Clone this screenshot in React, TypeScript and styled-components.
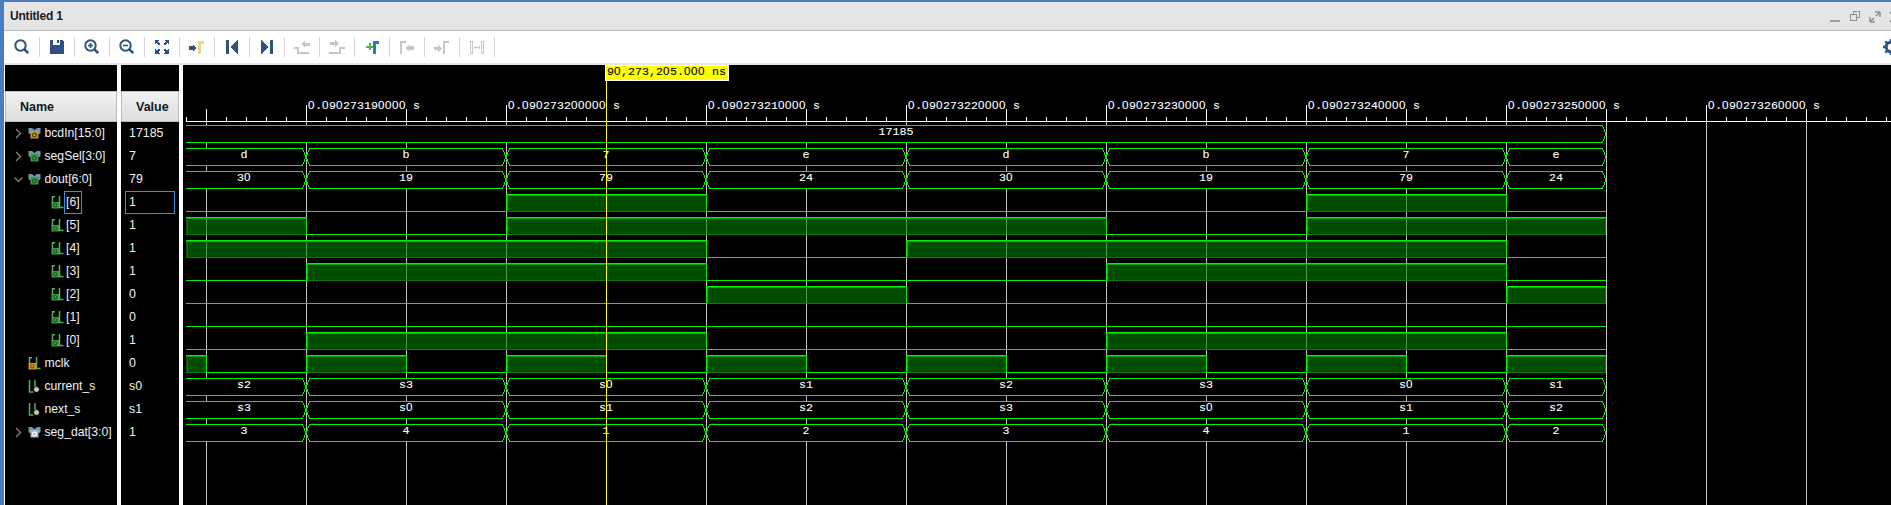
import React from "react";
import styled, { createGlobalStyle } from "styled-components";

const Global = createGlobalStyle`
  html, body { margin: 0; padding: 0; background: #fff; overflow: hidden; }
  #root { width: 1891px; height: 505px; }
`;

const Frame = styled.div`
  width: 1891px;
  height: 505px;
  box-sizing: border-box;
  border-top: 2px solid #4a7cc4;
  border-left: 4px solid #4a7cc4;
  display: flex;
  flex-direction: column;
  overflow: hidden;
  background: #fff;
  font-family: "Liberation Sans", Arial, sans-serif;
`;
const TitleBar = styled.div`
  height: 28px;
  flex: none;
  background: #e5e5e5;
  border-bottom: 1px solid #b9b9b9;
  display: flex;
  align-items: center;
  padding: 0 0 0 6px;
`;
const Title = styled.span`
  font-size: 12px;
  font-weight: 700;
  color: #1a1a1a;
  letter-spacing: -0.2px;
`;
const WinButtons = styled.div`
  margin-left: auto;
  display: flex;
  gap: 8px;
  margin-right: -10px;
  padding-top: 2px;
`;
const Toolbar = styled.div`
  height: 32px;
  flex: none;
  background: #fff;
  border-bottom: 2px solid #e6e6e6;
  display: flex;
  align-items: center;
  padding-left: 1px;
  overflow: hidden;
`;
const ToolBtn = styled.div`
  width: 34px;
  height: 20px;
  flex: none;
  display: flex;
  align-items: center;
  justify-content: center;
  border-right: 1px solid #d6d6d6;
`;
const Gear = styled.div`
  margin-left: auto;
  flex: none;
  width: 8px;
  height: 16px;
  overflow: hidden;
`;
const Main = styled.div`
  flex: 1;
  min-height: 0;
  display: grid;
  grid-template-columns: 112px 58px 1708px;
  column-gap: 4px;
  padding-left: 1px;
  background: #fff;
`;
const Column = styled.div`
  background: #000;
  display: flex;
  flex-direction: column;
  padding-top: 26px;
`;
const HeaderCell = styled.div`
  height: 31px;
  flex: none;
  box-sizing: border-box;
  background: linear-gradient(#f2f2f2, #dedede);
  border: 1px solid #bdbdbd;
  display: flex;
  align-items: center;
  padding-left: 14px;
  font-size: 12.5px;
  font-weight: 700;
  color: #101828;
`;
const Row = styled.div<{ $indent: number }>`
  height: 23px;
  flex: none;
  display: flex;
  align-items: center;
  padding-left: ${(p) => p.$indent}px;
  font-size: 12.2px;
  color: #eef2f8;
  white-space: nowrap;
`;
const Chevron = styled.svg`
  width: 9px;
  height: 11px;
  flex: none;
  margin-right: 5px;
`;
const NameIcon = styled.svg`
  width: 13px;
  height: 13px;
  flex: none;
`;
const NameLabel = styled.span<{ $selected?: boolean; $child?: boolean }>`
  height: 23px;
  line-height: 21px;
  box-sizing: border-box;
  padding: 0 1px;
  margin-left: ${(p) => (p.$child ? "0" : "1.5px")};
  border: 1px solid ${(p) => (p.$selected ? "#3d8fd1" : "transparent")};
`;
const ValueCell = styled.div<{ $selected?: boolean }>`
  height: 23px;
  flex: none;
  box-sizing: border-box;
  margin: 0 4px;
  padding-left: 3px;
  line-height: 21px;
  font-size: 12.4px;
  color: #eef2f8;
  border: 1px solid ${(p) => (p.$selected ? "#3d8fd1" : "transparent")};
`;
const WavePane = styled.div`
  background: #000;
  overflow: hidden;
`;
const WaveSvg = styled.svg`
  display: block;
  shape-rendering: crispEdges;
`;
const MonoText = styled.text<{ $fill: string }>`
  font-family: "Liberation Mono", "Courier New", monospace;
  font-size: 11.67px;
  fill: ${(p) => p.$fill};
  stroke: ${(p) => p.$fill};
  stroke-width: 0.1px;
`;
const PlainZero = styled.tspan`
  font-family: "Liberation Sans", Arial, sans-serif;
`;

const CELL = 7;
const MonoLabel = ({ x, y, fill, children }: { x: number; y: number; fill: string; children: string }) => (
  <MonoText $fill={fill} y={y}>
    {children.split("").map((c, i) =>
      c === "0" ? (
        <PlainZero key={i} x={x + i * CELL}>{c}</PlainZero>
      ) : (
        <tspan key={i} x={x + i * CELL}>{c}</tspan>
      )
    )}
  </MonoText>
);
const CenterLabel = ({ cx, y, children }: { cx: number; y: number; children: string }) => (
  <MonoLabel x={cx - (children.length * CELL) / 2} y={y} fill="#fff">{children}</MonoLabel>
);

const NAVY = "#2f5185";
const OFF = "#c6c6c6";

const Search = ({ mark }: { mark?: "plus" | "minus" }) => (
  <svg width="18" height="18" viewBox="0 0 18 18">
    <circle cx="7.5" cy="7.5" r="5.2" fill="none" stroke={NAVY} strokeWidth="2" />
    <path d="M11.2 11.2 L15.2 15.2" stroke={NAVY} strokeWidth="2.6" />
    {mark && <path d="M5 7.5h5" stroke={NAVY} strokeWidth="1.6" />}
    {mark === "plus" && <path d="M7.5 5v5" stroke={NAVY} strokeWidth="1.6" />}
  </svg>
);
const I = ({ children }: { children: React.ReactNode }) => (
  <svg width="18" height="18" viewBox="0 0 18 18" shapeRendering="crispEdges">{children}</svg>
);
const tools: React.ReactNode[] = [
  <Search key="s" />,
  <I key="save"><path d="M2 2h3v5h7V2h2l2 2v12H2z" fill={NAVY} /><rect x="9" y="2" width="2" height="3" fill={NAVY} /></I>,
  <Search key="in" mark="plus" />,
  <Search key="out" mark="minus" />,
  <I key="fit"><path d="M2 2h5l-1.6 1.6L7.5 6 6 7.5 3.6 5.4 2 7z M16 2v5l-1.6-1.6L12 7.5 10.5 6l2.1-2.4L11 2z M2 16v-5l1.6 1.6L6 10.5 7.5 12l-2.1 2.4L7 16z M16 16h-5l1.6-1.6L10.5 12 12 10.5l2.4 2.1L16 11z" fill={NAVY} /></I>,
  <I key="goto"><rect x="1" y="8" width="4" height="4" fill={NAVY} /><path d="M5 6.5l3 3.5-3 3.5z" fill={NAVY} /><path d="M10 16V3h6v2.5h-3.5V16z" fill="#e8d68a" /></I>,
  <I key="first"><rect x="3" y="2" width="3" height="14" fill={NAVY} /><path d="M15 2v14L7 9z" fill={NAVY} /></I>,
  <I key="last"><path d="M3 2v14l8-7z" fill={NAVY} /><rect x="12" y="2" width="3" height="14" fill={NAVY} /></I>,
  <I key="prev"><path d="M1 9h5v5h10v2H4v-5H1z" fill={OFF} /><path d="M8 6l4-3.5V5h5v3h-5v2z" fill={OFF} /></I>,
  <I key="next"><path d="M1 14h10V9h6v2h-4v5H1z" fill={OFF} /><path d="M2 4h5V2l4 3.5L7 9V7H2z" fill={OFF} /></I>,
  <I key="add"><path d="M3 7.5h2.5V5h2v2.5H10v2H7.5V12h-2V9.5H3z" fill="#46b848" /><path d="M10 16V3h6v2.5h-3.500V16z" fill="#2f7ab5" /></I>,
  <I key="pm"><path d="M2 16V3h6v2h-4v11z" fill={OFF} /><path d="M7 10l4-3.500V8h5v4h-5v1.500z" fill={OFF} /></I>,
  <I key="nm"><path d="M1 9h4V7l4 3.500L5 14v-2H1z" fill={OFF} /><path d="M10 16V3h6v2h-4v11z" fill={OFF} /></I>,
  <I key="sw"><path d="M2.500 3.500h2v12h-2zM13.500 3.500h2v12h-2z" fill="none" stroke={OFF} /><path d="M6 9.500h6M7 8v3M11 8v3" stroke={OFF} /></I>,
];

type Kind = "bus" | "bit";
type Tint = "orange" | "green" | "grey";
const tintFill: Record<Tint, string> = { orange: "#e98a1c", green: "#3f9a45", grey: "#a9b3ba" };

const BusGlyph = ({ tint }: { tint: Tint }) => (
  <NameIcon viewBox="0 0 13 13">
    <path d="M0.500 1h3.500l2.500 2L9 1h3.500v5l-1 1h-10l-1-1z" fill="#6f98ad" />
    <rect x="2.500" y="4" width="8" height="7.500" fill={tintFill[tint]} />
    <circle cx="6.500" cy="8" r="1.900" fill="none" stroke={tint === "grey" ? "#fff" : "#1f5a25"} strokeWidth="1.200" />
  </NameIcon>
);
const BitGlyph = ({ tint }: { tint: Tint }) =>
  tint === "grey" ? (
    <NameIcon viewBox="0 0 13 13">
      <path d="M1.500 0v12h4M7 0v7h2" fill="none" stroke="#55b05a" strokeWidth="1.500" />
      <circle cx="8.500" cy="9.500" r="2.800" fill="#c9c9c9" stroke="#000" strokeWidth="0.600" />
    </NameIcon>
  ) : (
    <NameIcon viewBox="0 0 13 13">
      <path d="M1.500 0v7M1.500 0.700h2.500M8.500 0v11.500h4" fill="none" stroke="#55b05a" strokeWidth="1.500" />
      <rect x="0.500" y="6" width="7.500" height="6.500" fill={tintFill[tint]} />
      <circle cx="4.300" cy="9.200" r="1.700" fill="none" stroke={tint === "orange" ? "#8a4f10" : "#1f5a25"} strokeWidth="1.100" />
    </NameIcon>
  );

type Sig = { name: string; value: string; kind: Kind; tint: Tint; open?: boolean; child?: boolean; selected?: boolean };
const signals: Sig[] = [
  { name: "bcdIn[15:0]", value: "17185", kind: "bus", tint: "orange", open: false },
  { name: "segSel[3:0]", value: "7", kind: "bus", tint: "green", open: false },
  { name: "dout[6:0]", value: "79", kind: "bus", tint: "green", open: true },
  { name: "[6]", value: "1", kind: "bit", tint: "green", child: true, selected: true },
  { name: "[5]", value: "1", kind: "bit", tint: "green", child: true },
  { name: "[4]", value: "1", kind: "bit", tint: "green", child: true },
  { name: "[3]", value: "1", kind: "bit", tint: "green", child: true },
  { name: "[2]", value: "0", kind: "bit", tint: "green", child: true },
  { name: "[1]", value: "0", kind: "bit", tint: "green", child: true },
  { name: "[0]", value: "1", kind: "bit", tint: "green", child: true },
  { name: "mclk", value: "0", kind: "bit", tint: "orange" },
  { name: "current_s", value: "s0", kind: "bit", tint: "grey" },
  { name: "next_s", value: "s1", kind: "bit", tint: "grey" },
  { name: "seg_dat[3:0]", value: "1", kind: "bus", tint: "grey", open: false },
];

const EDGES = [186, 306, 506, 706, 906, 1106, 1306, 1506, 1606];
const LINE = "#00f000";
const rowTop = (n: number) => 125 + 23 * n;

const BusTrace = ({ row, labels }: { row: number; labels: string[] }) => {
  const t = rowTop(row) + 0.5;
  const b = t + 17;
  const m = t + 8.5;
  return (
    <g>
      {labels.map((label, i) => {
        const x0 = EDGES[i];
        const x1 = EDGES[i + 1];
        const first = i === 0;
        const d = first
          ? `M${x0} ${t}H${x1 - 3.5}L${x1} ${m}L${x1 - 3.5} ${b}H${x0}`
          : `M${x0} ${m}L${x0 + 3.5} ${t}H${x1 - 3.5}L${x1} ${m}L${x1 - 3.5} ${b}H${x0 + 3.5}Z`;
        const cx = first ? 244 : (x0 + x1) / 2;
        return (
          <g key={i}>
            <path d={d} fill="#000" stroke={LINE} strokeWidth="1" />
            <CenterLabel cx={cx} y={t + 9.5}>{label}</CenterLabel>
          </g>
        );
      })}
    </g>
  );
};

const WholeBus = ({ row, label }: { row: number; label: string }) => {
  const t = rowTop(row) + 0.5;
  const b = t + 17;
  return (
    <g>
      <path d={`M186 ${t}H1602.500L1606 ${t + 8.5}L1602.500 ${b}H186`} fill="#000" stroke={LINE} />
      <CenterLabel cx={896} y={t + 9.5}>{label}</CenterLabel>
    </g>
  );
};

const BitTrace = ({ row, highs }: { row: number; highs: [number, number][] }) => {
  const t = rowTop(row);
  const b = t + 17;
  return (
    <g>
      <rect x={186} y={b} width={1420} height={1} fill={LINE} />
      {highs.map(([x0, x1]) => (
        <g key={x0}>
          <rect x={x0} y={t + 1} width={x1 - x0} height={16} fill="rgba(0,128,0,0.6)" />
          <rect x={x0} y={b} width={x1 - x0} height={1} fill="#0b7a0b" />
          <rect x={x0} y={t} width={x1 - x0} height={1} fill={LINE} />
          <rect x={x0} y={t + 1} width={x1 - x0} height={1} fill="#00a800" />
          {x0 === 186 ? (
            <rect x={187} y={t + 1} width={1} height={17} fill="#0b7a0b" />
          ) : (
            <>
              <rect x={x0} y={t} width={1} height={18} fill={LINE} />
              <rect x={x0 + 1} y={t + 1} width={1} height={16} fill="#00a800" />
            </>
          )}
          {x1 === 1606 ? (
            <rect x={1605} y={t + 1} width={1} height={17} fill="#0b7a0b" />
          ) : (
            <rect x={x1} y={t} width={1} height={18} fill={LINE} />
          )}
        </g>
      ))}
    </g>
  );
};

const range = (from: number, to: number, step: number) => {
  const out: number[] = [];
  for (let v = from; v <= to; v += step) out.push(v);
  return out;
};

const rulerLabel = (i: number) => `0.090273${190 + i * 10}000 s`;

const Ruler = () => (
  <g>
    <rect x={186} y={121} width={1705} height={1} fill="#fff" />
    {range(186, 1890, 20).map((x) => <rect key={x} x={x} y={117} width={1} height={4} fill="#fff" />)}
    {range(206, 1890, 100).map((x) => <rect key={x} x={x} y={109} width={1} height={12} fill="#fff" />)}
    {range(306, 1706, 200).map((x, i) => (
      <g key={x}>
        <rect x={x} y={105} width={1} height={16} fill="#fff" />
        <MonoLabel x={x + 2} y={109} fill="#fff">{rulerLabel(i)}</MonoLabel>
      </g>
    ))}
  </g>
);

const Waves = () => (
  <WaveSvg width={1708} height={440} viewBox="183 65 1708 440">
    {range(206, 1890, 100).map((x) => <rect key={x} x={x} y={122} width={1} height={383} fill="#c4c4c4" />)}
    <Ruler />
    <WholeBus row={0} label="17185" />
    <BusTrace row={1} labels={["d", "b", "7", "e", "d", "b", "7", "e"]} />
    <BusTrace row={2} labels={["30", "19", "79", "24", "30", "19", "79", "24"]} />
    <BitTrace row={3} highs={[[506, 706], [1306, 1506]]} />
    <BitTrace row={4} highs={[[186, 306], [506, 1106], [1306, 1606]]} />
    <BitTrace row={5} highs={[[186, 706], [906, 1506]]} />
    <BitTrace row={6} highs={[[306, 706], [1106, 1506]]} />
    <BitTrace row={7} highs={[[706, 906], [1506, 1606]]} />
    <BitTrace row={8} highs={[]} />
    <BitTrace row={9} highs={[[306, 706], [1106, 1506]]} />
    <BitTrace row={10} highs={[[186, 206], [306, 406], [506, 606], [706, 806], [906, 1006], [1106, 1206], [1306, 1406], [1506, 1606]]} />
    <BusTrace row={11} labels={["s2", "s3", "s0", "s1", "s2", "s3", "s0", "s1"]} />
    <BusTrace row={12} labels={["s3", "s0", "s1", "s2", "s3", "s0", "s1", "s2"]} />
    <BusTrace row={13} labels={["3", "4", "1", "2", "3", "4", "1", "2"]} />
    <rect x={606} y={81} width={1} height={424} fill="#ffff00" />
    <rect x={605} y={65} width={124} height={16} fill="#fff" />
    <rect x={606} y={66} width={122} height={14} fill="#ffff00" />
    <MonoLabel x={607} y={75} fill="#000">90,273,205.000 ns</MonoLabel>
  </WaveSvg>
);

const Arrow = ({ open }: { open: boolean }) => (
  <Chevron viewBox="0 0 9 11">
    <path d={open ? "M0.500 3.500L4.500 7.500L8.500 3.500" : "M2 1L6.500 5.500L2 10"} fill="none" stroke="#8a8a8a" strokeWidth="1.200" />
  </Chevron>
);

export default function App() {
  return (
    <Frame>
      <Global />
      <TitleBar>
        <Title>Untitled 1</Title>
        <WinButtons>
          <svg width="12" height="12" viewBox="0 0 12 12"><rect x="1" y="9" width="10" height="2" fill="#a0a0a0" /></svg>
          <svg width="12" height="12" viewBox="0 0 12 12" shapeRendering="crispEdges"><path d="M4.500 3.500V0.500H10.500V6.500H7.500M1.500 3.500H7.500V9.500H1.500z" fill="none" stroke="#8f8f8f" /></svg>
          <svg width="12" height="12" viewBox="0 0 12 12"><path d="M1 11V6M1 11H6M1 11L5 7M11 1V6M11 1H6M11 1L7 5" fill="none" stroke="#8f8f8f" strokeWidth="1.500" /></svg>
          <svg width="12" height="12" viewBox="0 0 12 12"><path d="M1 1L11 11M11 1L1 11" stroke="#8f8f8f" strokeWidth="1.600" /></svg>
        </WinButtons>
      </TitleBar>
      <Toolbar>
        {tools.map((icon, i) => <ToolBtn key={i}>{icon}</ToolBtn>)}
        <Gear>
          <svg width="16" height="16" viewBox="0 0 16 16">
            <circle cx="8" cy="8" r="4.800" fill="none" stroke="#2f5185" strokeWidth="3" />
            <path d="M8 0v16M0 8h16M2.300 2.300l11.400 11.400M13.700 2.300L2.300 13.700" stroke="#2f5185" strokeWidth="2.400" strokeDasharray="3 10 3" />
          </svg>
        </Gear>
      </Toolbar>
      <Main>
        <Column>
          <HeaderCell>Name</HeaderCell>
          {signals.map((s) => (
            <Row key={s.name} $indent={s.child ? 46 : s.open === undefined ? 23 : 9}>
              {s.open !== undefined && <Arrow open={s.open} />}
              {s.kind === "bus" ? <BusGlyph tint={s.tint} /> : <BitGlyph tint={s.tint} />}
              <NameLabel $selected={s.selected} $child={s.child}>{s.name}</NameLabel>
            </Row>
          ))}
        </Column>
        <Column>
          <HeaderCell>Value</HeaderCell>
          {signals.map((s) => <ValueCell key={s.name} $selected={s.selected}>{s.value}</ValueCell>)}
        </Column>
        <WavePane>
          <Waves />
        </WavePane>
      </Main>
    </Frame>
  );
}
